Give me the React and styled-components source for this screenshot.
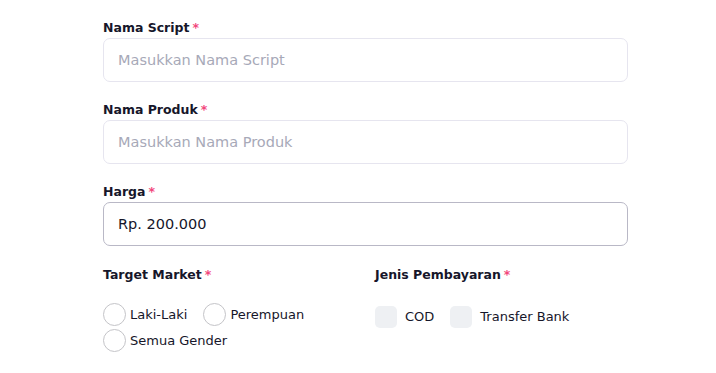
import React from 'react'
import styled, { createGlobalStyle } from 'styled-components'

const GlobalStyle = createGlobalStyle`
  body {
    margin: 0;
    background: #ffffff;
    font-family: "DejaVu Sans", "Open Sans", sans-serif;
  }
`

const Form = styled.form`
  width: 525px;
  padding: 18px 0 0 103px;
  display: flex;
  flex-direction: column;
`

const Field = styled.div`
  display: flex;
  flex-direction: column;
  margin-bottom: 18px;
`

const Label = styled.label`
  font-size: 12.5px;
  font-weight: 700;
  line-height: 20px;
  color: #16162a;
`

const Required = styled.span`
  color: #f2477c;
  margin-left: 3px;
`

const Input = styled.input`
  box-sizing: border-box;
  height: 44px;
  width: 100%;
  border: 1px solid ${(p) => (p.$focused ? '#b9b8c6' : '#e6e5ef')};
  border-radius: 7px;
  padding: 0 14px;
  font-family: inherit;
  font-size: 14.5px;
  color: #16162a;
  caret-color: #16162a;
  outline: none;
  &::placeholder {
    color: #a7a9b8;
  }
`

const Columns = styled.div`
  display: grid;
  grid-template-columns: 272px 1fr;
`

const OptionGroup = styled.div`
  display: flex;
  flex-wrap: wrap;
  align-items: center;
  column-gap: 16px;
  row-gap: 3px;
  margin-top: ${(p) => p.$top || 18}px;
  width: ${(p) => p.$width || 'auto'};
`

const Option = styled.label`
  display: flex;
  align-items: center;
  gap: ${(p) => p.$gap || 4}px;
  font-size: 13px;
  color: #16162a;
  height: 23px;
`

const Radio = styled.span`
  box-sizing: border-box;
  width: 23px;
  height: 23px;
  border-radius: 50%;
  border: 1px solid #c4c4c8;
  background: #fff;
`

const Check = styled.span`
  width: 22px;
  height: 22px;
  border-radius: 5px;
  background: #eef0f3;
`

export default function App() {
  return (
    <>
      <GlobalStyle />
      <Form onSubmit={(e) => e.preventDefault()}>
        <Field>
          <Label>Nama Script<Required>*</Required></Label>
          <Input placeholder="Masukkan Nama Script" />
        </Field>
        <Field>
          <Label>Nama Produk<Required>*</Required></Label>
          <Input placeholder="Masukkan Nama Produk" />
        </Field>
        <Field>
          <Label>Harga<Required>*</Required></Label>
          <Input $focused autoFocus defaultValue="Rp. 200.000" />
        </Field>
        <Columns>
          <div>
            <Label>Target Market<Required>*</Required></Label>
            <OptionGroup $width="220px">
              <Option><Radio />Laki-Laki</Option>
              <Option><Radio />Perempuan</Option>
              <Option><Radio />Semua Gender</Option>
            </OptionGroup>
          </div>
          <div>
            <Label>Jenis Pembayaran<Required>*</Required></Label>
            <OptionGroup $top={20}>
              <Option $gap={8}><Check />COD</Option>
              <Option $gap={8}><Check />Transfer Bank</Option>
            </OptionGroup>
          </div>
        </Columns>
      </Form>
    </>
  )
}
